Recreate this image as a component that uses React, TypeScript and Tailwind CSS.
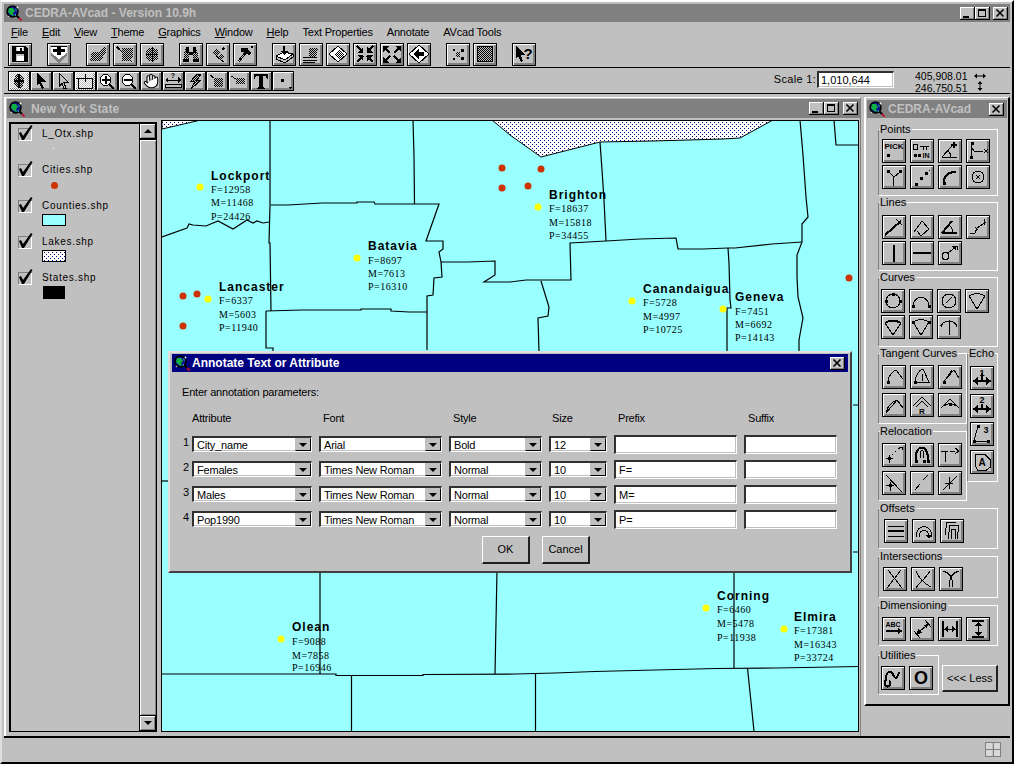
import { Hand } from "lucide-react";

type Icon = {
  w?: string; // white fill
  y?: string; // grey fill
  g?: string; // dither fill
  f?: string; // black fill
  d?: string; // thin stroke
  b?: string; // bold stroke
  t?: [number, number, string, number][]; // small text
  sel?: boolean;
};

const BEVEL = "border border-black bg-[#c0c0c0] shadow-[inset_1px_1px_0_#fff,inset_-2px_-2px_0_#808080]";

const TOP_GROUPS: Icon[][] = [
  [{ w: "M8 12h7v5H8z M8 3h6v4H8z", d: "M3.5 2.5h13l2 2v13h-15z", f: "M4 3h3v14H4z M15 3h3v14h-3z M7 7h8v3H7z M11 4h2v3h-2z" }],
  [{ w: "M3 2h16v7l-8 6-8-6z", y: "M3 9l8 6 8-6v3l-8 7-8-7z", f: "M9 2h4v3h4v3h-4v3H9V8H5V5h4z", d: "M3 2.5h16" }],
  [
    { g: "M3 17l2-9h6l6-5h2v5l-5 9z" },
    { g: "M8 4h11v9l-5 4H8z", d: "M3 3l15 15", b: "M3 3l3 3" },
    { g: "M5 6l6-3 6 3v9l-6 3-6-3z", d: "M11 3v15 M5 10h12" },
  ],
  [
    { g: "M5 5h4v12H3zM13 5h4l2 12h-6z", f: "M6 3h3v6H6z M13 3h3v6h-3z M9 8h4v3H9z M3 15h6v3H3z M13 15h6v3h-6z" },
    { g: "M5 8l4-4 4 4-4 4z M11 13l3-3 3 3-3 3z", b: "M15 6l2-2", d: "M9 12l8 6" },
    { d: "M5 18L14 7 M4 17l9-11", f: "M7 4h7v2l3 3-2 2-4-3H7z", b: "M17 3h2" },
  ],
  [
    { w: "M3 12l8-4 9 2-8 6z", b: "M11 2v6", f: "M7 7h8l-4 4z", d: "M3 12l8-4 9 2-8 6zM3 15l9 4 8-6M3 12v3M20 10v3" },
    { g: "M9 4h9l-2 9H9z", d: "M3 13h14 M3 16h14 M3 18h12" },
    { w: "M2 10l9-8 9 8-9 8z", g: "M8 10l5-5 4 5-5 5z", d: "M2 10l9-8 9 8-9 8z" },
    { b: "M9 8L3 2M13 8l6-6M9 12l-6 6M13 12l6 6", f: "M9 9V3L3 9z M13 9V3l6 6z M9 11v6l-6-6z M13 11v6l6-6z" },
    { b: "M4 4l5 5M18 4l-5 5M4 17l5-5M18 17l-5-5", f: "M2 2h6L2 8z M20 2h-6l6 6z M2 19h6l-6-6z M20 19h-6l6-6z" },
    { w: "M1 10l10-9 10 9-10 9z", d: "M1 10l10-9 10 9-10 9z", f: "M5 10l6-5v3h5v4h-5v3z" },
  ],
  [
    { f: "M6 5h2v2H6z M6 14h2v2H6z M14 5h3v3h-3z M14 13h3v3h-3z", g: "M9 8h4v5H9z" },
    { g: "M4 3h14v15H4z", d: "M3.5 2.5h15v15h-15z" },
  ],
  [{ f: "M3 2l9 9H8l2 6-2 1-3-6-2 3z", t: [[15, 15, "?", 15]] }],
];

const TOOLBAR2: (Icon & { hand?: boolean })[] = [
  { sel: true, g: "M5 9a5 7 0 1 0 10 0a5 7 0 1 0-10 0z", f: "M9 2h2v14H9z M5 8h10v2H5z" },
  { f: "M6 1l9 9H10l3 6-2 1-3-6-2 3z" },
  { d: "M6.5 1.5l9 9H11l2 6-2 .5-2-5.500-2.500 2.500z" },
  { sel: true, d: "M3 6h14v10H3z M10 2v8 M1 6h6" },
  { b: "M12 12l5 5", w: "M3 8a5.500 5.500 0 1 0 11 0a5.500 5.500 0 1 0-11 0z", f: "M8 4h1.500v8H8z M4.500 7.300h8v1.500h-8z", d: "M3 8a5.500 5.500 0 1 0 11 0a5.500 5.500 0 1 0-11 0z" },
  { b: "M12 12l5 5", w: "M3 8a5.500 5.500 0 1 0 11 0a5.500 5.500 0 1 0-11 0z", f: "M4.500 7.300h8v1.500h-8z", d: "M3 8a5.500 5.500 0 1 0 11 0a5.500 5.500 0 1 0-11 0z" },
  { hand: true },
  { d: "M2 15.500h16 M2 12.500h16v3H2z", f: "M2 8l3-3v6z M18 8l-3-3v6z M5 7.500h10v1H5z", t: [[10, 6, "?", 7]] },
  { g: "M6 17l4-8H6l6-7h4l-4 6h4L6 17z", d: "M6 17l4-8H6l6-7h4l-4 6h4z" },
  { g: "M7 6h9v9H7z", d: "M3 3l4 3" },
  { g: "M7 6h9v6H7z", d: "M2 4l5 3" },
  { f: "M3 2h14v5h-1l-1-3h-3v11l2 1v1H6v-1l2-1V4H5L4 7H3z" },
  { f: "M8 7h3v3H8z M16 15h3l-1.500 2z" },
];

const PIN = (x: number, y: number) => `M${x - 1} ${y - 1}h3v3h-3z`;

const POINTS: Icon[] = [
  { t: [[11, 9, "PICK", 8]], f: PIN(5, 15) },
  { d: "M9 6h9 M12 6v4 M15 6v4 M2.500 4h4v5h-4z", f: PIN(4, 15) + PIN(8, 15), t: [[15, 18, "IN", 7]] },
  { d: "M3 17L13 6 M3 17h15 M12 17a9 9 0 0 0-3-6", b: "M15 2v6 M12 5h6" },
  { f: PIN(5, 3) + PIN(4, 17), d: "M5 5l-1 11 M5 8l2 3h9 M17 9l4 4 M21 9l-4 4" },
  { f: PIN(5, 5) + PIN(17, 5), d: "M5 5l6 6 6-5 M11 11l-1 9" },
  { f: PIN(5, 18) + PIN(10, 12) + PIN(15, 7), d: "M18 4h1" },
  { f: PIN(5, 17), b: "M5 16c0-7 5-10 12-10" },
  { d: "M5 11a6 6 0 1 0 12 0a6 6 0 1 0-12 0z M9 9l4 4 M13 9l-4 4" },
];

const LINES: Icon[] = [
  { b: "M2 19L18 5", d: "M13 3l6 6" },
  { d: "M3 16l8-11 7 8-8 7-4-5" },
  { b: "M3 17L13 5 M3 17h15", d: "M14 17a11 11 0 0 0-4-8" },
  { d: "M3 18l5-1 2-5 9-6 M8 11l3 3 M17 3l1 6" },
  { b: "M11 3v17" },
  { b: "M2 11h18" },
  { d: "M3 14a3.500 3.500 0 1 0 7 0a3.500 3.500 0 1 0-7 0z M9 11l9-7 M13 4h5v4 M14 4l3 4" },
];

const CURVES: Icon[] = [
  { d: "M4 11a7 7 0 1 0 14 0a7 7 0 1 0-14 0z", f: PIN(4, 11) + PIN(18, 11) + PIN(11, 4) },
  { d: "M3 17c0-13 16-13 16 0", f: PIN(3, 16) + PIN(19, 16) },
  { d: "M4 11a7 7 0 1 0 14 0a7 7 0 1 0-14 0z M8 13l6-6" },
  { d: "M3 6c5-3 11-3 16 0l-8 13z" },
  { d: "M3 7l8 12 8-12", b: "M3 7c5-3 11-3 16 0" },
  { d: "M3 6c5-3 11-3 16 0l-8 13z", f: PIN(3, 6) + PIN(19, 6) },
  { d: "M3 11c2-8 14-8 16 0 M11 4v15", b: "M3 10l1-2" },
];

const TANGENT: Icon[] = [
  { f: PIN(5, 16), d: "M5 15c0-5 5-10 8-11 M13 4l7 9" },
  { f: PIN(4, 16), d: "M4 16c0-6 4-12 8-13 M5 16h14 M12 3l6 13 M12 8l-1 7" },
  { f: PIN(5, 16), d: "M5 15L15 4 M15 4l5 8 M7 13l6-9" },
  { d: "M3 18c2-6 6-10 11-12 M14 6l6 8 M3 19L14 6" },
  { d: "M2 12l9-9 9 9 M5 13l6-6 6 6", t: [[11, 20, "R", 8]] },
  { d: "M2 14l9-9 9 9 M5 12c3-3 9-3 12 0", f: PIN(11, 10) },
];

const ECHO: Icon[] = [
  { b: "M2 14h18", f: "M2 14l5-4v8z M20 14l-5-4v8z M10 6h2v8h-2z", t: [[11, 9, "1", 9]] },
  { b: "M2 14h18", f: "M2 14l5-4v8z M20 14l-5-4v8z M10 9h2v5h-2z", t: [[11, 8, "2", 9]] },
  { d: "M7 3L3 18h14", f: PIN(7, 3) + PIN(3, 18) + PIN(17, 18), t: [[15, 10, "3", 9]] },
  { d: "M4 3.500h10l5 5v8l-4 3H7l-3-5z", t: [[11, 15, "A", 10]] },
];

const RELOCATION: Icon[] = [
  { f: PIN(6, 14), d: "M3 14h7 M6 11v8 M9 11l1-1 M12 8l1-1 M15 5l3-2 M17 3h2v3" },
  { b: "M5 17c-2-18 13-18 12 0", d: "M9 14c0-10 4-10 4 0", f: PIN(5, 17) + PIN(13, 17) + PIN(17, 17) },
  { d: "M2 7h7 M6 7v11 M11 7h5 M16 4l4 3-4 3" },
  { d: "M3 3l16 17 M3 13h8 M7 10v9", f: PIN(7, 13) },
  { d: "M4 18l5-6 M12 8l5-5" },
  { d: "M4 18L18 4 M6 11h8 M10 5v12" },
];

const OFFSETS: Icon[] = [
  { d: "M3 6h16 M3 16h16", b: "M3 11h16" },
  { d: "M3 17c0-14 16-14 16 0 M6 17c0-9 10-9 10 0", f: "M13 15h6l-3 4z" },
  { d: "M7 19l2-14h9l-2 14 M4 15L6 2h9 M10 19l1-10h4l-1 10" },
];

const INTERSECTIONS: Icon[] = [
  { d: "M4 2l14 18 M17 2L3 20" },
  { d: "M4 3c3 7 9 13 15 16 M18 3C14 10 7 15 4 20" },
  { d: "M3 3c8 2 10 8 10 16 M19 3c-8 2-10 8-10 16" },
];

const DIMENSIONING: Icon[] = [
  { t: [[10, 9, "ABC", 7]], b: "M3 13h13", f: "M20 13l-5-3v6z" },
  { d: "M3 13l6 7 M14 2l6 7 M8 14l7-6", f: "M6 16l5-1-4-4z M17 6l-5 1 4 4z" },
  { b: "M4 3v16 M18 3v16", d: "M5 11h12", f: "M5 11l4-3v6z M17 11l-4-3v6z" },
  { b: "M5 3h12 M5 19h12", d: "M11 4v14", f: "M11 4l-4 4h8z M11 18l-4-4h8z" },
];

const UTILITIES: Icon[] = [
  { b: "M3 18c1-6 0-14 6-13 3 1 2 6 5 6 3-1 1-5 4-5 M3 18c1 2 4 2 5 0s-1-3 0-4" },
  { t: [[11, 17, "O", 18]] },
];

function Glyph({ icon, box }: { icon: Icon; box: string }) {
  return (
    <svg viewBox={box} className="block w-full h-full" shapeRendering="crispEdges">
      {icon.sel && <rect x="0" y="0" width="100%" height="100%" fill="url(#sel)" />}
      {icon.w && <path d={icon.w} fill="#fff" />}
      {icon.y && <path d={icon.y} fill="#808080" />}
      {icon.g && <path d={icon.g} fill="url(#dith)" />}
      {icon.f && <path d={icon.f} fill="#000" />}
      {icon.d && <path d={icon.d} fill="none" stroke="#000" strokeWidth="1" />}
      {icon.b && <path d={icon.b} fill="none" stroke="#000" strokeWidth="2" />}
      {icon.t?.map(([x, y, s, size]) => (
        <text
          key={s + x}
          x={x}
          y={y}
          textAnchor="middle"
          fontSize={size}
          fontWeight="bold"
          fontFamily="Liberation Sans"
          shapeRendering="auto"
        >
          {s}
        </text>
      ))}
    </svg>
  );
}

function Tool({ icon }: { icon: Icon }) {
  return (
    <button type="button" className={`${BEVEL} w-[24px] h-[24px] shrink-0`}>
      <Glyph icon={icon} box="0 0 22 22" />
    </button>
  );
}

function Group({ label, className, children }: { label: string; className: string; children: React.ReactNode }) {
  return (
    <div className={`relative border border-white border-l-[#808080] ${className}`}>
      <span className="absolute left-[1px] top-[-7px] bg-[#c0c0c0] pr-[1px] text-[11px] leading-[13px] whitespace-nowrap">{label}</span>
      {children}
    </div>
  );
}

function ToolGrid({ icons, className }: { icons: Icon[]; className: string }) {
  return (
    <div className={`flex flex-wrap gap-y-[2px] gap-x-[4px] ${className}`}>
      {icons.map((ic, i) => (
        <Tool key={i} icon={ic} />
      ))}
    </div>
  );
}

function Logo({ className }: { className: string }) {
  return (
    <svg viewBox="0 0 16 16" className={className}>
      <line x1="10" y1="10" x2="13" y2="13" stroke="#000" strokeWidth="2" />
      <line x1="13" y1="13" x2="15.500" y2="15.500" stroke="#c01030" strokeWidth="2" />
      <circle cx="6.500" cy="6.500" r="5.500" fill="#10108a" stroke="#000" strokeWidth="1.500" />
      <path d="M3 3h4l2 3-2 2 1 3-3-1-3-3z" fill="#10b040" />
      <path d="M9 3l2 2-1 1z M8 10l2-1v2z" fill="#20c0e0" />
      <circle cx="11.500" cy="2.500" r="0.900" fill="#fff" />
      <circle cx="2.500" cy="11.500" r="0.800" fill="#d0d0d0" />
    </svg>
  );
}

function WinBtn({ kind, className }: { kind: "min" | "max" | "close"; className?: string }) {
  return (
    <button type="button" className={`w-[15px] h-[13px] bg-[#c0c0c0] border-b border-r border-black shadow-[inset_1px_1px_0_#fff,inset_-1px_-1px_0_#808080] ${className ?? ""}`}>
      <svg viewBox="0 0 14 12" className="block w-full h-full" shapeRendering="crispEdges">
        {kind === "min" && <path d="M3 9h6v2H3z" fill="#000" />}
        {kind === "max" && <path d="M3 2h8v1H3zM3 3h1v7H3zM10 3h1v7h-1zM3 9h8v1H3zM3 3h8v1H3z" fill="#000" />}
        {kind === "close" && <path d="M3.500 2.500l7 7M10.500 2.500l-7 7" stroke="#000" strokeWidth="1.600" shapeRendering="auto" />}
      </svg>
    </button>
  );
}

const MENU = ["File", "Edit", "View", "Theme", "Graphics", "Window", "Help", "Text Properties", "Annotate", "AVcad Tools"];
const UNDERLINED = ["File", "Edit", "View", "Theme", "Graphics", "Window", "Help"];

const LAYERS = [
  { name: "L_Otx.shp", symbol: <div className="w-[1px] h-[1px] bg-white ml-[11px] mt-[7px]" /> },
  { name: "Cities.shp", symbol: <div className="w-[7px] h-[7px] rounded-full bg-[#cc3300] ml-[9px] mt-[5px]" /> },
  { name: "Counties.shp", symbol: <div className="w-[24px] h-[12px] bg-[#99ffff] border border-black mt-[1px]" /> },
  {
    name: "Lakes.shp",
    symbol: (
      <svg className="block w-[24px] h-[12px] mt-[1px]">
        <rect x="0.500" y="0.500" width="23" height="11" fill="url(#lake)" stroke="#000" />
      </svg>
    ),
  },
  { name: "States.shp", symbol: <div className="w-[22px] h-[13px] bg-black ml-[1px] mt-[1px]" /> },
];

const PLACES = [
  { name: "Lockport", x: 211, y: 180, dot: [200, 187], rows: [["F=12958", 193], ["M=11468", 206], ["P=24426", 220]] },
  { name: "Batavia", x: 368, y: 250, dot: [357, 258], rows: [["F=8697", 264], ["M=7613", 277], ["P=16310", 290]] },
  { name: "Lancaster", x: 219, y: 291, dot: [208, 299], rows: [["F=6337", 304], ["M=5603", 318], ["P=11940", 331]] },
  { name: "Brighton", x: 549, y: 199, dot: [538, 207], rows: [["F=18637", 212], ["M=15818", 226], ["P=34455", 239]] },
  { name: "Canandaigua", x: 643, y: 293, dot: [632, 301], rows: [["F=5728", 306], ["M=4997", 320], ["P=10725", 333]] },
  { name: "Geneva", x: 735, y: 301, dot: [723, 309], rows: [["F=7451", 315], ["M=6692", 328], ["P=14143", 341]] },
  { name: "Olean", x: 292, y: 631, dot: [281, 639], rows: [["F=9088", 645], ["M=7858", 659], ["P=16946", 671]] },
  { name: "Corning", x: 717, y: 600, dot: [706, 608], rows: [["F=6460", 613], ["M=5478", 627], ["P=11938", 641]] },
  { name: "Elmira", x: 794, y: 621, dot: [784, 629], rows: [["F=17381", 634], ["M=16343", 648], ["P=33724", 661]] },
] as const;

const RED_DOTS = [[183, 296], [197, 294], [183, 326], [502, 168], [502, 188], [541, 169], [528, 186], [849, 278]];

const BORDERS = [
  "M270 120v85l-1 38 1 0 1 68",
  "M413 120l1 36 .5 48",
  "M270.500 205H288l34-2h35l0-1h17l1 2h64l-13 37h17v8l-4 3 2 10 1 15-8 1-1 17-6 1v16l0 38",
  "M441 262l27 0 27-1v14l-11 7 14 0 12 0 16-2h45l-1-37 36-2 34-2 36-1 2 11 25 0 25-1 7 0 37-4 30-2",
  "M600 142l2 28 2 30 2 41",
  "M266 311l36-1 59 0 0-1h30l0 2 18 1 18 0",
  "M266 311v37h7v4",
  "M162 237l25-9 2-4 4 1 13 1 12-5 15 8 14-9 6 3 4-2 6 2 6-1",
  "M800 120l3 35 3 42 2 20-6 7v18l-5 13v22l1 20 5 21-4 22v12",
  "M728 248l1 15 1 37 1 8h-4v44",
  "M541 281l8 26-1 9-10 2 1 34",
  "M834 120l2 25h22",
  "M161 481h7",
  "M853 405h5M853 552h5",
  "M320 570v104",
  "M497 570l-2 104",
  "M734 570v98",
  "M162 674h174l0 1.500h87l0-1 92-.5 40-1 40-1.500 40-1 41-1 40-1 60-.5 56-1 26-.5",
  "M351.500 675v56",
  "M535.500 674v57",
  "M747.500 668l6.500 63",
];

const ROWS = [
  { n: 1, attr: "City_name", font: "Arial", style: "Bold", size: "12", prefix: "" },
  { n: 2, attr: "Females", font: "Times New Roman", style: "Normal", size: "10", prefix: "F=" },
  { n: 3, attr: "Males", font: "Times New Roman", style: "Normal", size: "10", prefix: "M=" },
  { n: 4, attr: "Pop1990", font: "Times New Roman", style: "Normal", size: "10", prefix: "P=" },
];

const SUNK = "bg-white border-t-2 border-l-2 border-t-[#303030] border-l-[#303030] border-r border-b border-r-white border-b-white shadow-[inset_-1px_-1px_0_#c0c0c0]";

function Combo({ value }: { value: string }) {
  return (
    <div className={`${SUNK} h-[16px] flex items-center justify-between pl-[3px] mt-[1px]`}>
      <span className="text-[11px] tracking-[-0.2px] leading-[12px]">{value}</span>
      <span className="w-[16px] h-[13px] bg-[#c0c0c0] border border-black border-t-[#c0c0c0] border-l-[#c0c0c0] flex items-center justify-center shrink-0">
        <span className="w-0 h-0 border-l-[4px] border-r-[4px] border-t-[4px] border-l-transparent border-r-transparent border-t-black" />
      </span>
    </div>
  );
}

function Field({ value }: { value: string }) {
  return (
    <div className={`${SUNK} h-[19px] flex items-center pl-[3px] text-[11px]`}>{value}</div>
  );
}

function PushBtn({ label, className }: { label: string; className: string }) {
  return (
    <button type="button" className={`h-[28px] text-[11px] bg-[#c0c0c0] border-t border-l border-t-white border-l-white border-r-2 border-b-2 border-r-[#202020] border-b-[#202020] ${className}`}>
      {label}
    </button>
  );
}

function Dialog() {
  return (
    <div className="absolute left-[6px] top-[230px] w-[684px] h-[222px] bg-[#c0c0c0] border-t-2 border-l-2 border-t-[#dfdfdf] border-l-[#dfdfdf] border-r-2 border-b-2 border-r-[#404040] border-b-[#404040] pt-[1px] px-[2px]">
      <div className="h-[18px] bg-[#000080] flex items-center pl-[2px] pr-[3px]">
        <Logo className="w-[16px] h-[16px] shrink-0" />
        <span className="ml-[2px] text-white font-bold text-[12px]">Annotate Text or Attribute</span>
        <WinBtn kind="close" className="ml-auto" />
      </div>
      <div className="pl-[10px] pt-[13px] text-[11px] tracking-[-0.2px] leading-[14px]">Enter annotation parameters:</div>
      <div className="pl-[20px] mt-[12px]">
        <div className="grid grid-cols-[120px_123px_93px_58px_123px_93px] gap-x-[7px] text-[11px] tracking-[-0.2px] leading-[14px]">
          <span>Attribute</span>
          <span className="pl-[4px]">Font</span>
          <span className="pl-[4px]">Style</span>
          <span className="pl-[3px]">Size</span>
          <span className="pl-[4px]">Prefix</span>
          <span className="pl-[4px]">Suffix</span>
        </div>
        <div className="mt-[10px] flex flex-col gap-y-[6px]">
          {ROWS.map((r) => (
            <div key={r.n} className="relative grid grid-cols-[120px_123px_93px_58px_123px_93px] gap-x-[7px] h-[19px]">
              <span className="absolute left-[-9px] top-[0px] text-[11px] leading-[14px]">{r.n}</span>
              <Combo value={r.attr} />
              <Combo value={r.font} />
              <Combo value={r.style} />
              <Combo value={r.size} />
              <Field value={r.prefix} />
              <Field value="" />
            </div>
          ))}
        </div>
      </div>
      <div className="flex justify-start pl-[310px] gap-x-[12px] mt-[7px]">
        <PushBtn label="OK" className="w-[48px]" />
        <PushBtn label="Cancel" className="w-[48px]" />
      </div>
    </div>
  );
}

function MapView() {
  return (
    <div className="relative w-[698px] h-[612px] bg-[#99ffff] border border-black">
      <svg viewBox="162 121 696 610" className="block w-[696px] h-[610px]">
        <path d="M162 120h39l-39 9z M492 120h281l-33 18-17 1-70 2-53 1-59 15-31-22z" fill="url(#lake)" stroke="#000" strokeWidth="1" />
        <g fill="none" stroke="#000" strokeWidth="1.200">
          {BORDERS.map((b) => (
            <path key={b} d={b} />
          ))}
        </g>
        {RED_DOTS.map(([x, y]) => (
          <circle key={`${x}-${y}`} cx={x} cy={y} r="3.500" fill="#cc3300" />
        ))}
        {PLACES.map((p) => (
          <g key={p.name}>
            <circle cx={p.dot[0]} cy={p.dot[1]} r="3.500" fill="#ffff00" />
            <text x={p.x} y={p.y} className="font-['Liberation_Sans',sans-serif] font-bold text-[12px] tracking-[1px]">
              {p.name}
            </text>
            {p.rows.map(([s, y]) => (
              <text key={s} x={p.x} y={y} className="font-['Liberation_Serif',serif] text-[10px] tracking-[0.500px]">
                {s}
              </text>
            ))}
          </g>
        ))}
      </svg>
      <Dialog />
    </div>
  );
}

function ScrollArrow({ up }: { up: boolean }) {
  return (
    <div className="h-[15px] bg-[#c0c0c0] border-b border-r border-black shadow-[inset_1px_1px_0_#fff,inset_-1px_-1px_0_#808080] flex items-center justify-center shrink-0">
      <span className={up ? "w-0 h-0 border-l-[4px] border-r-[4px] border-b-[4px] border-l-transparent border-r-transparent border-b-black" : "w-0 h-0 border-l-[4px] border-r-[4px] border-t-[4px] border-l-transparent border-r-transparent border-t-black"} />
    </div>
  );
}

function Toc() {
  return (
    <div className="mt-[2px] w-[148px] h-[610px] border-2 border-black border-r border-b flex">
      <div className="flex-1 pt-[1px] pl-[6px] text-[10px] tracking-[0.7px]">
        {LAYERS.map((l) => (
          <div key={l.name} className="h-[36px]">
            <div className="flex items-center h-[16px]">
              <svg viewBox="0 0 16 16" className="block w-[16px] h-[16px] shrink-0">
                <path d="M1.500 15V3.500H15" fill="none" stroke="#808080" strokeWidth="1" shapeRendering="crispEdges" />
                <path d="M1.500 15.500H14.500V4" fill="none" stroke="#fff" strokeWidth="1" shapeRendering="crispEdges" />
                <path d="M2 8l2-1 2 4 8-11 1.500 1-8.500 14h-2z" fill="#000" />
              </svg>
              <span className="ml-[9px] mt-[2px] leading-[14px]">{l.name}</span>
            </div>
            <div className="ml-[25px]">{l.symbol}</div>
          </div>
        ))}
      </div>
      <div className="w-[17px] border-l border-black flex flex-col">
        <ScrollArrow up />
        <div className="flex-1 bg-[#c0c0c0] border-t border-b border-black shadow-[inset_1px_1px_0_#fff,inset_-1px_-1px_0_#808080]" />
        <ScrollArrow up={false} />
      </div>
    </div>
  );
}

function Palette() {
  return (
    <div className="ml-[3px] mt-[3px] w-[147px] h-[609px] bg-[#c0c0c0] border-l-2 border-t border-l-white border-t-white border-r-2 border-b-2 border-r-black border-b-black px-[1px] pt-[2px]">
      <div className="h-[18px] bg-[#808080] flex items-center pl-[2px] pr-[3px]">
        <Logo className="w-[16px] h-[16px] shrink-0" />
        <span className="ml-[3px] text-[#c0c0c0] font-bold text-[12px]">CEDRA-AVcad</span>
        <WinBtn kind="close" className="ml-auto" />
      </div>
      <div className="pl-[11px] pt-[11px] w-[131px]">
        <Group label="Points" className="h-[67px]">
          <ToolGrid icons={POINTS} className="pt-[9px] pl-[3px]" />
        </Group>
        <Group label="Lines" className="h-[69px] mt-[6px]">
          <ToolGrid icons={LINES} className="pt-[12px] pl-[3px]" />
        </Group>
        <Group label="Curves" className="h-[70px] mt-[6px]">
          <ToolGrid icons={CURVES} className="pt-[11px] pl-[2px]" />
        </Group>
        <div className="flex mt-[6px]">
          <div className="w-[89px]">
            <Group label="Tangent Curves" className="h-[71px]">
              <ToolGrid icons={TANGENT} className="pt-[11px] pl-[3px] gap-y-[4px]" />
            </Group>
            <Group label="Relocation" className="h-[70px] mt-[7px]">
              <ToolGrid icons={RELOCATION} className="pt-[11px] pl-[3px] gap-y-[4px]" />
            </Group>
          </div>
          <Group label="Echo" className="w-[31px] h-[129px]">
            <ToolGrid icons={ECHO} className="pt-[12px] pl-[2px] gap-y-[4px]" />
          </Group>
        </div>
        <Group label="Offsets" className="h-[41px] mt-[7px]">
          <ToolGrid icons={OFFSETS} className="pt-[10px] pl-[5px]" />
        </Group>
        <Group label="Intersections" className="h-[42px] mt-[7px]">
          <ToolGrid icons={INTERSECTIONS} className="pt-[10px] pl-[4px]" />
        </Group>
        <Group label="Dimensioning" className="h-[41px] mt-[7px]">
          <div className="flex pt-[11px] pl-[3px] gap-x-[4px]">
            {DIMENSIONING.map((ic, i) => (
              <Tool key={i} icon={ic} />
            ))}
          </div>
        </Group>
        <div className="flex items-start mt-[9px]">
          <Group label="Utilities" className="w-[62px] h-[40px]">
            <ToolGrid icons={UTILITIES} className="pt-[10px] pl-[2px]" />
          </Group>
          <button type="button" className="ml-[3px] mt-[10px] w-[56px] h-[27px] text-[11px] bg-[#c0c0c0] border-t border-l border-t-white border-l-white border-r-2 border-b-2 border-r-[#202020] border-b-[#202020]">
            &lt;&lt;&lt; Less
          </button>
        </div>
      </div>
    </div>
  );
}

export default function App() {
  return (
    <div className="w-[1014px] h-[764px] flex flex-col bg-[#c0c0c0] text-black font-['Liberation_Sans',sans-serif] border-t-2 border-l-2 border-t-white border-l-[#dfdfdf] border-r-2 border-b-2 border-r-black border-b-black p-[2px] overflow-hidden">
      <svg className="absolute w-0 h-0">
        <defs>
          <pattern id="dith" width="2" height="2" patternUnits="userSpaceOnUse">
            <rect width="1" height="1" fill="#000" />
            <rect x="1" y="1" width="1" height="1" fill="#000" />
          </pattern>
          <pattern id="sel" width="2" height="2" patternUnits="userSpaceOnUse">
            <rect width="1" height="1" fill="#fff" />
            <rect x="1" y="1" width="1" height="1" fill="#fff" />
          </pattern>
          <pattern id="lake" width="4" height="4" patternUnits="userSpaceOnUse">
            <rect width="4" height="4" fill="#fff" />
            <rect width="1" height="1" fill="#000080" />
            <rect x="2" y="2" width="1" height="1" fill="#000080" />
          </pattern>
        </defs>
      </svg>

      <div className="h-[18px] shrink-0 bg-[#808080] flex items-center pl-[2px] pr-[2px]">
        <Logo className="w-[16px] h-[16px] shrink-0" />
        <span className="ml-[3px] text-[#c0c0c0] font-bold text-[12px]">CEDRA-AVcad - Version 10.9h</span>
        <WinBtn kind="min" className="ml-auto" />
        <WinBtn kind="max" />
        <WinBtn kind="close" className="ml-[3px]" />
      </div>

      <div className="h-[20px] shrink-0 flex items-center pl-[7px] gap-x-[14px] text-[11px] tracking-[-0.2px]">
        {MENU.map((m) => (
          <span key={m}>
            {UNDERLINED.includes(m) ? (
              <>
                <span className="underline">{m[0]}</span>
                {m.slice(1)}
              </>
            ) : (
              m
            )}
          </span>
        ))}
      </div>

      <div className="h-[26px] shrink-0 flex pl-[4px] pt-[1px] gap-x-[15px] border-b border-black">
        {TOP_GROUPS.map((group, gi) => (
          <div key={gi} className="flex gap-x-[3px]">
            {group.map((ic, i) => (
              <button key={i} type="button" className={`${BEVEL} w-[24px] h-[23px] shrink-0`}>
                <Glyph icon={ic} box="0 0 22 21" />
              </button>
            ))}
          </div>
        ))}
      </div>

      <div className="h-[26px] shrink-0 flex items-start pl-[4px] pt-[3px] border-b border-black">
        {TOOLBAR2.map((ic, i) => (
          <button key={i} type="button" className={`${BEVEL} w-[22px] h-[20px] shrink-0 flex items-center justify-center`}>
            {ic.hand ? <Hand size={16} strokeWidth={1.6} color="#000" fill="#fff" /> : <Glyph icon={ic} box="0 0 20 18" />}
          </button>
        ))}
        <div className="ml-auto flex items-start pr-[24px] text-[11px]">
          <span className="leading-[16px] tracking-[0.300px] mr-[1px]">Scale 1:</span>
          <div className={`${SUNK} w-[77px] h-[17px] flex items-center pl-[2px]`}>1,010,644</div>
          <div className="ml-[21px] w-[54px] text-[10.500px] leading-[12px] mt-[-1px]">
            <div>405,908.01</div>
            <div>246,750.51</div>
          </div>
          <svg viewBox="0 0 12 20" className="ml-[5px] w-[12px] h-[20px]">
            <path d="M0 5l3-2.500v5zM12 5l-3-2.500v5z" fill="#000" />
            <path d="M2 5h8" stroke="#000" />
            <path d="M6 10l-2.500 3h5zM6 20l-2.500-3h5z" fill="#000" />
            <path d="M6 12v6" stroke="#000" />
          </svg>
        </div>
      </div>

      <div className="flex-1 flex items-start min-h-0">
        <div className="mt-[3px] w-[858px] h-[641px] bg-[#c0c0c0] border-t border-l-2 border-t-white border-l-white border-r border-b border-r-[#808080] border-b-[#808080] pl-[1px] pt-[1px]">
          <div className="h-[19px] w-[853px] bg-[#808080] flex items-center pl-[2px] pr-[2px]">
            <Logo className="w-[16px] h-[16px] shrink-0" />
            <span className="ml-[6px] text-[#c0c0c0] font-bold text-[12px] tracking-[0.150px]">New York State</span>
            <WinBtn kind="min" className="ml-auto" />
            <WinBtn kind="max" />
            <WinBtn kind="close" className="ml-[4px]" />
          </div>
          <div className="flex pt-[2px] pl-[2px] gap-x-[4px]">
            <Toc />
            <MapView />
          </div>
        </div>
        <Palette />
      </div>

      <div className="h-[24px] shrink-0 border-t-2 border-black flex items-center justify-end pr-[9px]">
        <svg viewBox="0 0 16 15" className="w-[16px] h-[15px]" shapeRendering="crispEdges">
          <path d="M0.500 0.500h15v14h-15z M8 0.500v14 M0.500 7.500h15" fill="none" stroke="#808080" />
          <path d="M1 1h6v6H1z M9 1h6v6H9z M1 8h6v6H1z M9 8h6v6H9z" fill="#d8d8d8" />
        </svg>
      </div>
    </div>
  );
}
